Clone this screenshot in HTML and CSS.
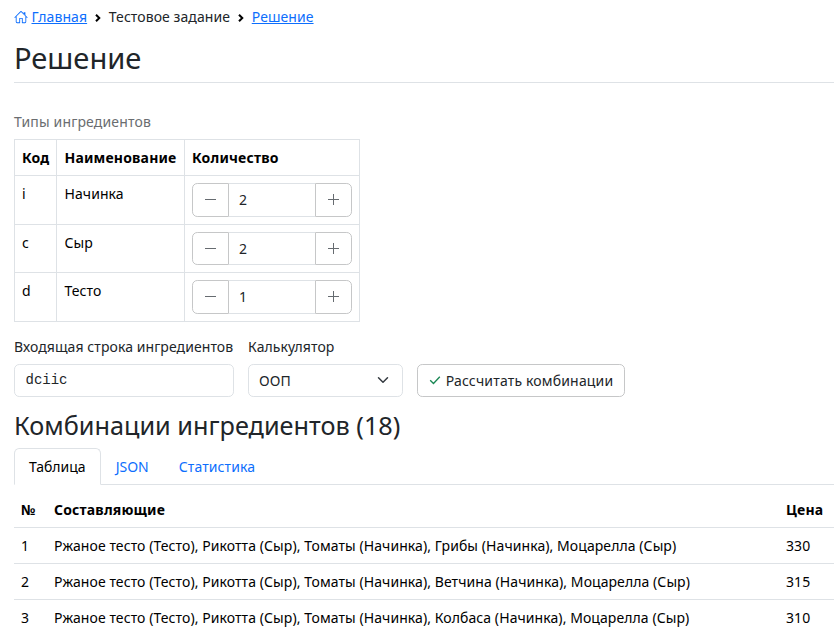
FILE: index.html
```html
<!DOCTYPE html>
<html lang="ru">
<head>
<meta charset="utf-8">
<title>Решение</title>
<link rel="stylesheet" href="styles.css">
</head>
<body>
<nav class="breadcrumbs">
  <svg class="icon home" viewBox="0 0 16 16"><path d="M8.707 1.5a1 1 0 0 0-1.414 0L.646 8.146a.5.5 0 0 0 .708.708L2 8.207V13.5A1.5 1.5 0 0 0 3.5 15h3a.5.5 0 0 0 .5-.5V10h2v4.500a.5.5 0 0 0 .5.5h3a1.500 1.500 0 0 0 1.500-1.500V8.207l.646.647a.5.5 0 0 0 .708-.708zM13 7.207V13.500a.5.5 0 0 1-.5.5H10V9.500a.5.5 0 0 0-.5-.5h-3a.5.5 0 0 0-.5.5V14H3.500a.5.5 0 0 1-.5-.5V7.207l5-5z"/><path d="M11 2.500h2V6l-2-2z"/></svg>
  <a href="#">Главная</a>
  <svg class="separator" viewBox="0 0 6 8"><path d="M1 .7 4.300 4 1 7.300"/></svg>
  <span>Тестовое задание</span>
  <svg class="separator" viewBox="0 0 6 8"><path d="M1 .7 4.300 4 1 7.300"/></svg>
  <a href="#">Решение</a>
</nav>
<h1>Решение</h1>
<table class="types">
  <caption>Типы ингредиентов</caption>
  <colgroup><col class="col-code"><col class="col-name"><col class="col-count"></colgroup>
  <thead><tr><th>Код</th><th>Наименование</th><th>Количество</th></tr></thead>
  <tbody>
    <tr><td>i</td><td>Начинка</td><td><div class="counter"><button><svg class="sign" viewBox="0 0 11 11"><path d="M0 5.500h11"/></svg></button><input value="2"><button><svg class="sign" viewBox="0 0 11 11"><path d="M0 5.500h11M5.500 0v11"/></svg></button></div></td></tr>
    <tr><td>c</td><td>Сыр</td><td><div class="counter"><button><svg class="sign" viewBox="0 0 11 11"><path d="M0 5.500h11"/></svg></button><input value="2"><button><svg class="sign" viewBox="0 0 11 11"><path d="M0 5.500h11M5.500 0v11"/></svg></button></div></td></tr>
    <tr><td>d</td><td>Тесто</td><td><div class="counter"><button><svg class="sign" viewBox="0 0 11 11"><path d="M0 5.500h11"/></svg></button><input value="1"><button><svg class="sign" viewBox="0 0 11 11"><path d="M0 5.500h11M5.500 0v11"/></svg></button></div></td></tr>
  </tbody>
</table>
<form class="controls">
  <label class="field source"><span>Входящая строка ингредиентов</span><input class="control mono" value="dciic"></label>
  <label class="field calculator"><span>Калькулятор</span>
    <span class="control select">ООП<svg class="chevron" viewBox="0 0 16 16"><path d="m2 5 6 6 6-6"/></svg></span>
  </label>
  <button class="submit" type="button"><svg class="check" viewBox="0 0 12 12"><path d="M1.200 6.200 4.500 9.500 10.800 2.700"/></svg>Рассчитать комбинации</button>
</form>
<h2>Комбинации ингредиентов (18)</h2>
<div class="tabs"><a class="tab active">Таблица</a><a class="tab">JSON</a><a class="tab">Статистика</a></div>
<table class="results">
  <colgroup><col class="col-number"><col><col class="col-price"></colgroup>
  <thead><tr><th>№</th><th>Составляющие</th><th>Цена</th></tr></thead>
  <tbody>
    <tr><td>1</td><td>Ржаное тесто (Тесто), Рикотта (Сыр), Томаты (Начинка), Грибы (Начинка), Моцарелла (Сыр)</td><td>330</td></tr>
    <tr><td>2</td><td>Ржаное тесто (Тесто), Рикотта (Сыр), Томаты (Начинка), Ветчина (Начинка), Моцарелла (Сыр)</td><td>315</td></tr>
    <tr><td>3</td><td>Ржаное тесто (Тесто), Рикотта (Сыр), Томаты (Начинка), Колбаса (Начинка), Моцарелла (Сыр)</td><td>310</td></tr>
  </tbody>
</table>
</body>
</html>
```
FILE: styles.css
```css
* { box-sizing: border-box; }
html { overflow: hidden; }
body {
  margin: 0;
  padding: 6px 2px 0 14px;
  font: 14px/21px "Noto Sans", sans-serif;
  letter-spacing: .078px;
  color: #212529;
  background: #fff;
}
a { color: #0d6efd; }
button, input { font: inherit; letter-spacing: inherit; color: inherit; margin: 0; background: #fff; }
.breadcrumbs { display: flex; align-items: center; height: 21px; }
.icon { width: 14px; height: 14px; margin-right: 3.5px; fill: #0d6efd; }
.separator { width: 6px; height: 8px; margin: 2px 8px 0 7.7px; fill: none; stroke: #000; stroke-width: 2; }
h1, h2 { font-weight: 400; line-height: 1.2; letter-spacing: 0; }
h1 { height: 56px; margin: 0 0 21px; padding-top: 14px; font-size: 29.1px; border-bottom: 1px solid #dee2e6; }
h2 { margin: 13px 0 7px; font-size: 25.25px; height: 31px; }
table { border-collapse: collapse; table-layout: fixed; color: #000; }
th, td { padding: 7px; text-align: left; vertical-align: top; }
th { font-weight: 700; letter-spacing: .18px; }
caption { padding: 7px 0; text-align: left; color: #6a6d70; letter-spacing: .15px; }
.types { width: 346px; }
.types th, .types td { border: 1px solid #dee2e6; }
.types td:nth-child(2), .types th:nth-child(2) { padding-left: 7.5px; }
.col-code { width: 42px; }
.col-name { width: 128px; }
.counter { display: flex; width: 160px; height: 33.5px; color: #212529; }
.counter button { display: flex; align-items: center; justify-content: center; width: 37px; padding: 0 1px 0 0; border: 1px solid #c6c7c8; }
.sign { width: 11px; height: 11px; fill: none; stroke: #666b70; stroke-width: 1; }
.counter button:first-child { border-radius: 5.25px 0 0 5.25px; }
.counter button:last-child { border-radius: 0 5.25px 5.25px 0; }
.counter input { flex: 1; min-width: 0; padding: 0 10px; border: solid #dee2e6; border-width: 1px 0; }
.controls { display: flex; align-items: flex-end; gap: 14px; margin-top: 14px; }
.field { display: flex; flex-direction: column; gap: 7px; white-space: nowrap; }
.source { width: 220px; }
.calculator { width: 155px; }
.control { width: 100%; height: 33.5px; padding: 0 10.5px; border: 1px solid #dee2e6; border-radius: 5.25px; }
.mono { font-family: "Liberation Mono", monospace; letter-spacing: 0; padding-bottom: 1px; }
.select { display: flex; align-items: center; justify-content: space-between; padding-left: 10px; }
.chevron { width: 12px; height: 12px; margin-right: 3px; fill: none; stroke: #343a40; stroke-width: 2; stroke-linecap: round; stroke-linejoin: round; }
.submit { display: flex; align-items: center; justify-content: center; width: 208px; height: 33.5px; padding: 0; border: 1px solid #c6c7c8; border-radius: 5.25px; white-space: nowrap; letter-spacing: .17px; }
.check { width: 12px; height: 12px; margin-right: 5px; fill: none; stroke: #198754; stroke-width: 1.300; }
.tabs { display: flex; height: 37px; border-bottom: 1px solid #dee2e6; margin-bottom: 7px; letter-spacing: 0; }
.tab { height: 37px; padding: 7px 14px; border: 1px solid transparent; text-decoration: none; color: #0d6efd; }
.tab:last-child { letter-spacing: .1px; }
.tab.active { color: #000; background: #fff; border-color: #dee2e6 #dee2e6 #fff; border-radius: 5.25px 5.25px 0 0; }
.results { width: 100%; }
.results tr { border-bottom: 1px solid #dee2e6; }
.col-number { width: 33px; }
.col-price { width: 55px; }
```
